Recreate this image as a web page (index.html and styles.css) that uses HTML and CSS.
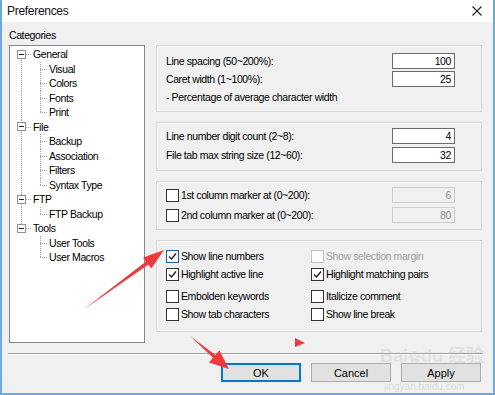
FILE: index.html
```html
<!DOCTYPE html>
<html lang="en">
<head>
    <meta charset="UTF-8">
    <title>Preferences</title>
    <link rel="stylesheet" href="styles.css">
</head>
<body>
    <div class="window">
        <div class="titlebar">
            <span class="title">Preferences</span>
            <svg class="close" width="10" height="10" viewBox="0 0 10 10">
                <path d="M0.5 0.5 L9.5 9.5 M9.5 0.5 L0.5 9.5" stroke="#222" stroke-width="1.1" fill="none"/>
            </svg>
        </div>

        <div class="main">
            <div class="cats">
                <div class="cats-label">Categories</div>
                <div class="tree">
                    <div class="node first"><span class="exp"></span>General</div>
                    <div class="leaf">Visual</div>
                    <div class="leaf">Colors</div>
                    <div class="leaf">Fonts</div>
                    <div class="leaf last">Print</div>
                    <div class="node"><span class="exp"></span>File</div>
                    <div class="leaf">Backup</div>
                    <div class="leaf">Association</div>
                    <div class="leaf">Filters</div>
                    <div class="leaf last">Syntax Type</div>
                    <div class="node"><span class="exp"></span>FTP</div>
                    <div class="leaf last">FTP Backup</div>
                    <div class="node end"><span class="exp"></span>Tools</div>
                    <div class="leaf no-outer">User Tools</div>
                    <div class="leaf no-outer last">User Macros</div>
                </div>
            </div>

            <div class="pages">
                <div class="group g1">
                    <div class="field-row">
                        <span>Line spacing (50~200%):</span>
                        <span class="textbox">100</span>
                    </div>
                    <div class="field-row">
                        <span>Caret width (1~100%):</span>
                        <span class="textbox">25</span>
                    </div>
                    <div class="note">- Percentage of average character width</div>
                </div>

                <div class="group g2">
                    <div class="field-row">
                        <span>Line number digit count (2~8):</span>
                        <span class="textbox">4</span>
                    </div>
                    <div class="field-row">
                        <span>File tab max string size (12~60):</span>
                        <span class="textbox">32</span>
                    </div>
                </div>

                <div class="group g3">
                    <div class="field-row">
                        <label class="check-item"><span class="check"></span>1st column marker at (0~200):</label>
                        <span class="textbox disabled">6</span>
                    </div>
                    <div class="field-row">
                        <label class="check-item"><span class="check"></span>2nd column marker at (0~200):</label>
                        <span class="textbox disabled">80</span>
                    </div>
                </div>

                <div class="group g4">
                    <label class="check-item"><span class="check checked hot"><svg viewBox="0 0 11 11"><path d="M2 5.5 L4.5 8 L9 2.5" /></svg></span>Show line numbers</label>
                    <label class="check-item disabled"><span class="check"></span>Show selection margin</label>
                    <label class="check-item"><span class="check checked"><svg viewBox="0 0 11 11"><path d="M2 5.5 L4.5 8 L9 2.5" /></svg></span>Highlight active line</label>
                    <label class="check-item"><span class="check checked"><svg viewBox="0 0 11 11"><path d="M2 5.5 L4.5 8 L9 2.5" /></svg></span>Highlight matching pairs</label>
                    <label class="check-item spaced"><span class="check"></span>Embolden keywords</label>
                    <label class="check-item spaced"><span class="check"></span>Italicize comment</label>
                    <label class="check-item"><span class="check"></span>Show tab characters</label>
                    <label class="check-item"><span class="check"></span>Show line break</label>
                </div>
            </div>
        </div>

        <div class="sep"></div>

        <div class="buttons">
            <button class="btn default">OK</button>
            <button class="btn">Cancel</button>
            <button class="btn">Apply</button>
        </div>
    </div>

    <!-- annotation arrows drawn over the dialog -->
    <svg class="marks" width="495" height="395" viewBox="0 0 495 395">
        <polygon points="164,250 143.1,257.4 146,261.4 83,310 148.4,264.6 151.3,268.6" fill="#f0393a"/>
        <polygon points="229,369 219.4,350.3 215.4,355 190,336 213,357.8 209,362.5" fill="#f0393a"/>
        <polygon points="295,338 305,343 295,347" fill="#f0393a"/>
    </svg>
    <div class="watermark">
        <div class="wm-big">Bai<span class="paw">&#10047;</span>du 经验</div>
    </div>
    <div class="watermark-url">jingyan.baidu.com</div>
</body>
</html>
```

FILE: styles.css
```css
body {
    margin: 0;
    position: relative;
    font-family: "Liberation Sans", Arial, sans-serif;
    font-size: 10.5px;
    letter-spacing: -0.4px;
    color: #000;
}
.window {
    width: 495px;
    height: 395px;
    box-sizing: border-box;
    border: 2px solid #6ea8dc;
    border-top: none;
    background: #f0f0f0;
    display: flex;
    flex-direction: column;
}
.titlebar {
    height: 22px;
    flex-shrink: 0;
    background: #fff;
    display: flex;
    align-items: center;
    padding: 0 11px 0 5px;
}
.title {
    font-size: 12px;
    letter-spacing: -0.3px;
    color: #111;
}
.close {
    margin-left: auto;
}

/* main area */
.main {
    display: flex;
    height: 321px;
}
.cats {
    margin-left: 7px;
    width: 136px;
}
.cats-label {
    padding-top: 6px;
    line-height: 14px;
    height: 14px;
}
.tree {
    margin-top: 3px;
    height: 298px;
    box-sizing: border-box;
    border: 1px solid #828790;
    background: #fff;
    padding-top: 1px;
    --dotv: repeating-linear-gradient(to bottom, #a0a0a0 0 1px, transparent 1px 2px);
    --doth: repeating-linear-gradient(to right, #a0a0a0 0 1px, transparent 1px 2px);
}
.node, .leaf {
    height: 14.5px;
    display: flex;
    align-items: center;
    background-repeat: no-repeat;
    white-space: nowrap;
}
.node {
    padding-left: 7px;
    background-image: var(--dotv), var(--doth);
    background-position: 11px 0, 16px 7px;
    background-size: 1px 100%, 6px 1px;
}
.node.first {
    background-position: 11px 7px, 16px 7px;
    background-size: 1px 8px, 6px 1px;
}
.node.end {
    background-size: 1px 7px, 6px 1px;
}
.exp {
    width: 9px;
    height: 9px;
    box-sizing: border-box;
    border: 1px solid #919191;
    background: #fff linear-gradient(#222, #222) center / 5px 1px no-repeat;
    margin-right: 7px;
}
.leaf {
    padding-left: 39px;
    background-image: var(--dotv), var(--dotv), var(--doth);
    background-position: 11px 0, 30px 0, 30px 7px;
    background-size: 1px 100%, 1px 100%, 8px 1px;
}
.leaf.last {
    background-size: 1px 100%, 1px 8px, 8px 1px;
}
.leaf.no-outer {
    background-size: 0 0, 1px 100%, 8px 1px;
}
.leaf.no-outer.last {
    background-size: 0 0, 1px 8px, 8px 1px;
}

/* option pages */
.pages {
    margin-left: 11px;
    width: 326px;
    padding-top: 23px;
}
.group {
    border: 1px solid #d5d5d5;
    box-shadow: inset 1px 1px 0 #fff;
    padding: 5px 26px 7px 9px;
}
.group + .group {
    margin-top: 10px;
}
.g1 {
    padding-top: 7px;
}
.g3 {
    padding-bottom: 6px;
}
.field-row {
    display: flex;
    align-items: center;
    justify-content: space-between;
    height: 16px;
}
.g1 .field-row + .field-row {
    margin-top: 2px;
}
.g2 .field-row + .field-row {
    margin-top: 3px;
}
.g3 .field-row + .field-row {
    margin-top: 4px;
}
.note {
    margin-top: 3px;
    line-height: 14px;
}
.textbox {
    width: 63px;
    height: 16px;
    box-sizing: border-box;
    border: 1px solid #6b6b6b;
    background: #fff;
    text-align: right;
    padding-right: 3px;
    line-height: 14px;
}
.textbox.disabled {
    border-color: #cccccc;
    background: #f0f0f0;
    color: #8d8d8d;
}
.check-item {
    display: flex;
    align-items: center;
    height: 16px;
    white-space: nowrap;
}
.check {
    width: 13px;
    height: 13px;
    box-sizing: border-box;
    border: 1px solid #333;
    background: #fff;
    margin-right: 2px;
    display: flex;
    align-items: center;
    justify-content: center;
}
.check svg {
    width: 11px;
    height: 11px;
}
.check path {
    fill: none;
    stroke: #222;
    stroke-width: 1.4;
}
.check.hot {
    border-color: #1e5fa8;
}
.check-item.disabled {
    color: #a0a0a0;
}
.check-item.disabled .check {
    border-color: #c4c4c4;
}
.g4 {
    display: grid;
    grid-template-columns: 145px 1fr;
    row-gap: 2px;
    padding-top: 7px;
    padding-bottom: 9px;
}
.check-item.spaced {
    margin-top: 4px;
}

/* bottom */
.sep {
    margin: 10px 10px 0 6px;
    border-top: 1px solid #a0a0a0;
    border-bottom: 1px solid #fff;
}
.buttons {
    display: flex;
    justify-content: flex-end;
    gap: 10px;
    margin-top: 8px;
    padding-right: 12px;
}
.btn {
    width: 80px;
    height: 19px;
    padding: 0;
    background: #e1e1e1;
    border: 1px solid #adadad;
    font-family: "Liberation Sans", Arial, sans-serif;
    font-size: 11px;
    color: #000;
}
.btn.default {
    border-color: #0078d7;
    box-shadow: inset 0 0 0 1px #0078d7;
}

/* overlays */
.marks {
    position: absolute;
    left: 0;
    top: 0;
    pointer-events: none;
}
.watermark {
    position: absolute;
    left: 380px;
    top: 341px;
    color: rgba(170, 170, 170, 0.22);
    font-family: "Liberation Sans", "Noto Sans CJK SC", sans-serif;
    letter-spacing: 0;
    pointer-events: none;
}
.wm-big {
    font-size: 18px;
    font-weight: bold;
}
.paw {
    font-size: 13px;
}
.watermark-url {
    position: absolute;
    left: 384px;
    top: 381px;
    font-size: 10px;
    letter-spacing: 0;
    color: rgba(170, 170, 170, 0.3);
    pointer-events: none;
}
```
